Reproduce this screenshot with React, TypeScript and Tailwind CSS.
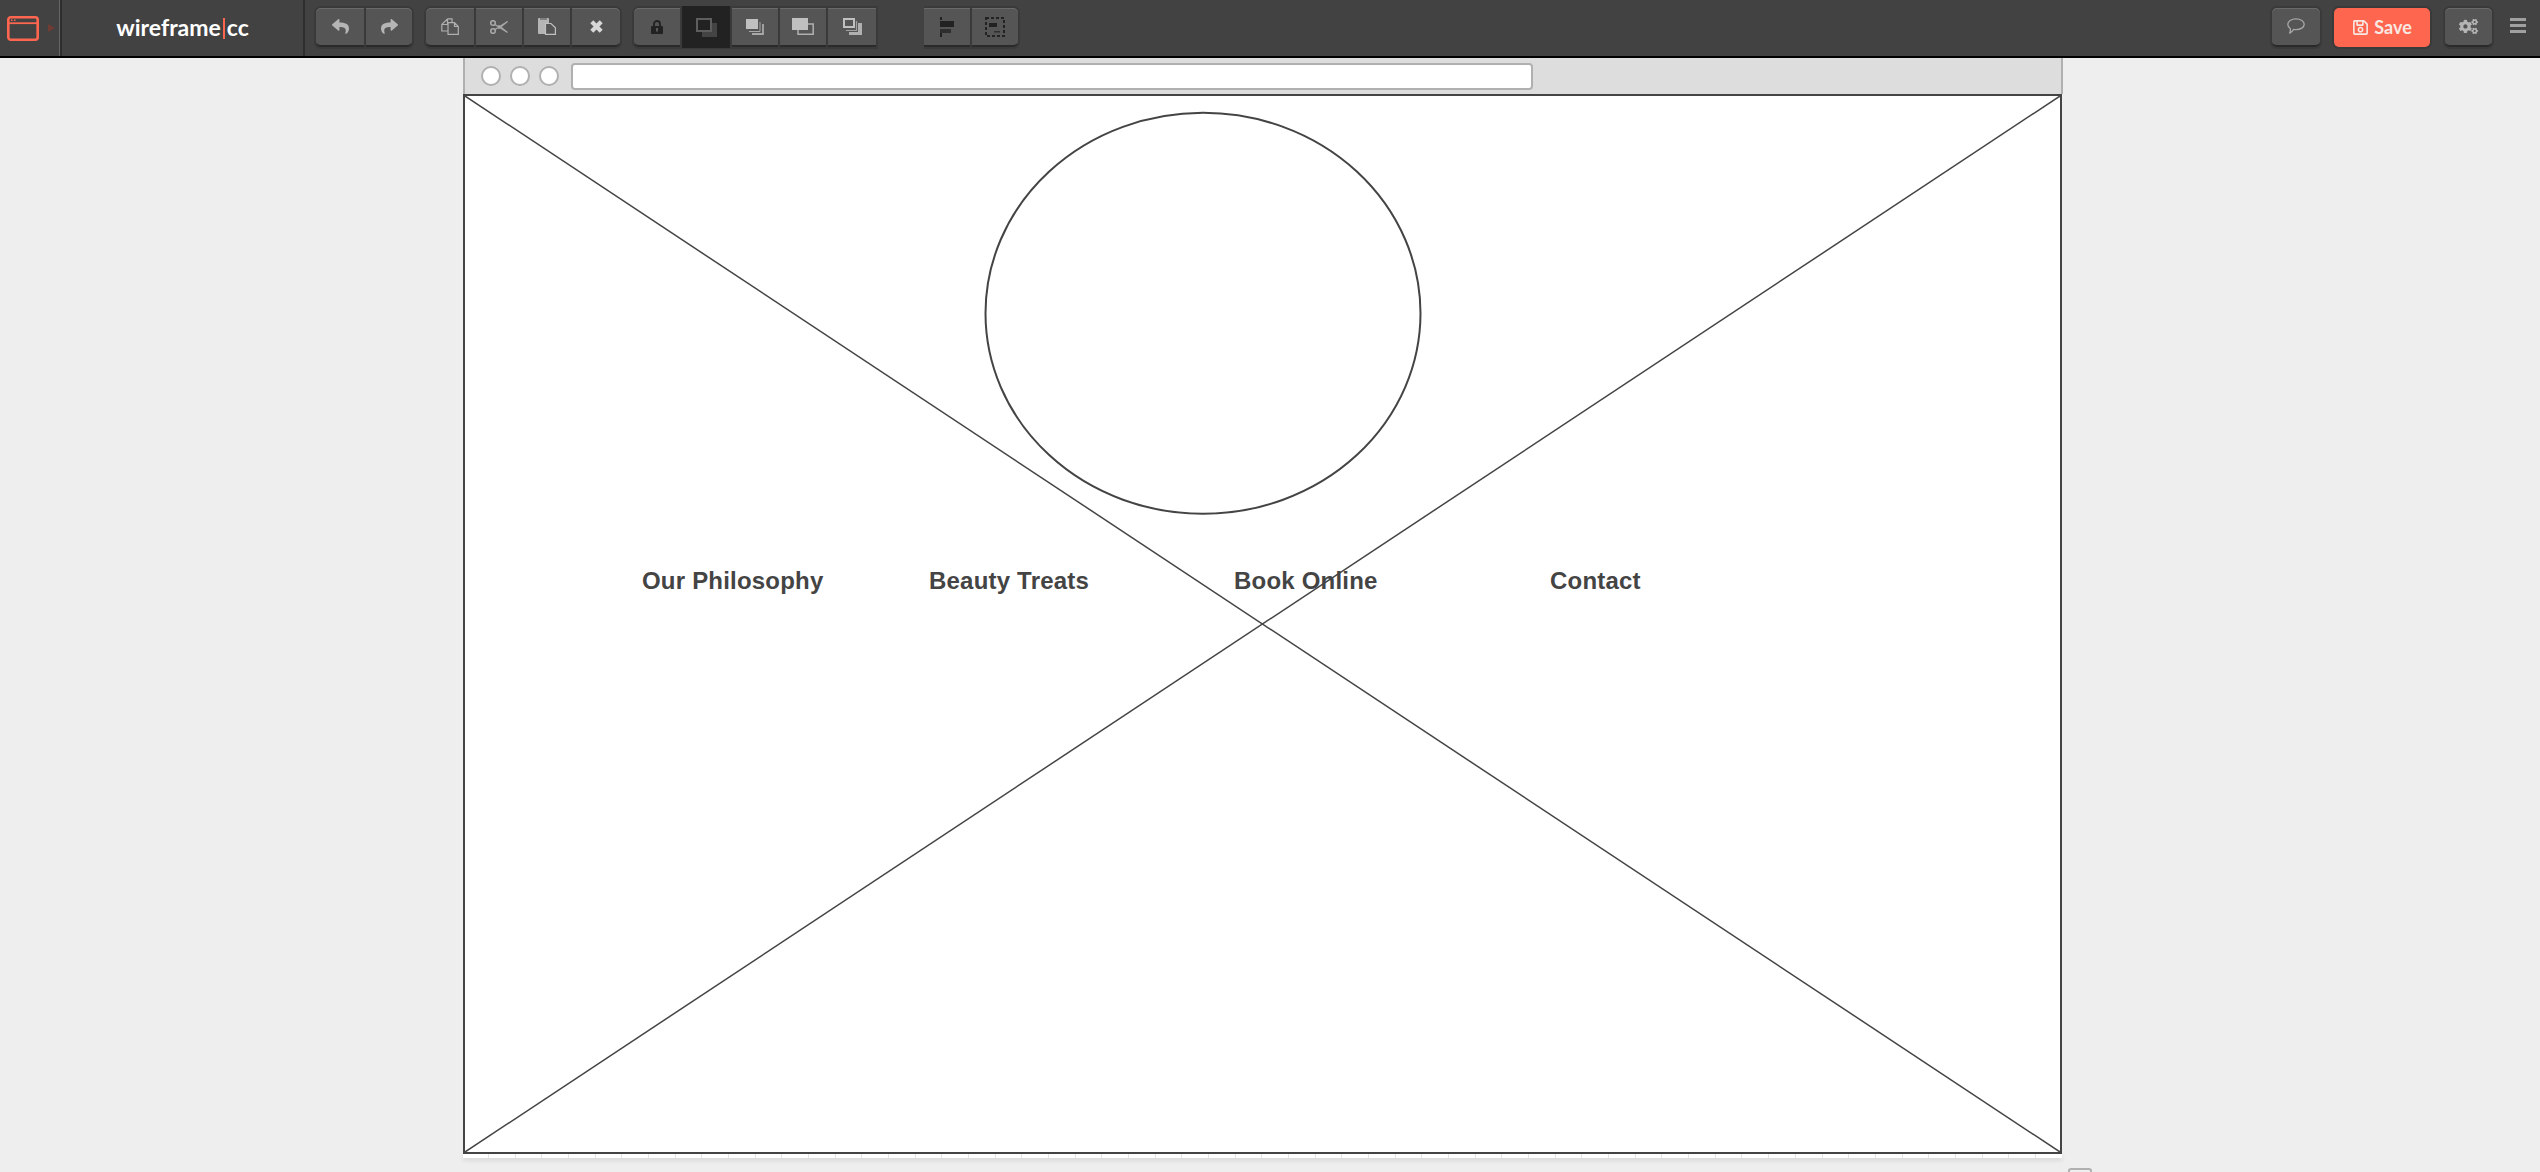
import React from "react";
import { FaReply, FaShare, FaRegSave, FaCogs } from "react-icons/fa";

function Btn({ className = "", children }: { className?: string; children?: React.ReactNode }) {
  return (
    <div className={"h-[39px] flex items-center justify-center bg-[#555555] border-b-2 border-[#2a2a2a] shadow-[inset_0_1px_0_#6a6a6a] text-[#b5b5b5] " + className}>
      {children}
    </div>
  );
}

function Group({ className = "", children }: { className?: string; children: React.ReactNode }) {
  return <div className={"flex self-start mt-[6px] gap-[2px] bg-[#3a3a3a] p-[2px] rounded-[7px] h-[43px] " + className}>{children}</div>;
}

function CopyIcon() {
  return (
    <svg width="18" height="17" viewBox="0 0 18 17" fill="none" stroke="#b0b0b0" strokeWidth="1.2">
      <path d="M6.5 0.8 H11 V4.5 M6.5 0.8 L0.8 6.5 V13 H7 M6.5 0.8 V6.5 H0.8" />
      <path d="M7 4.6 H13.5 L17.3 8.5 V16.4 H7 Z M13.5 4.6 V8.5 H17.3" />
    </svg>
  );
}

function CutIcon() {
  return (
    <svg width="18" height="14" viewBox="0 0 18 14" fill="none" stroke="#a8a8a8" strokeWidth="1.2">
      <circle cx="3" cy="3" r="2.3" strokeWidth="1.6" />
      <circle cx="3" cy="11" r="2.3" strokeWidth="1.6" />
      <path d="M5 4.4 L17.5 12.5 L8.5 5.2 M5 9.6 L17.5 1.5 L8.5 8.8" />
    </svg>
  );
}

function PasteIcon() {
  return (
    <svg width="18" height="17" viewBox="0 0 18 17">
      <rect x="0" y="0" width="11" height="16" fill="#b5b5b5" rx="1" />
      <rect x="2" y="0" width="7" height="2" fill="#808080" />
      <path d="M7.5 5.5 H13 L17.4 9.8 V16.4 H7.5 Z" fill="#555555" stroke="#c0c0c0" strokeWidth="1.2" />
    </svg>
  );
}

function CloseIcon() {
  return (
    <svg width="13" height="13" viewBox="0 0 13 13" fill="none" stroke="#d8d8d8" strokeWidth="4.2">
      <path d="M1.8 1.8 L11.2 11.2 M11.2 1.8 L1.8 11.2" />
    </svg>
  );
}

function LockIcon() {
  return (
    <svg width="12" height="14" viewBox="0 0 12 14">
      <path d="M3 6 V4 a3 3 0 0 1 6 0 V6" fill="none" stroke="#222222" strokeWidth="1.8" />
      <rect x="0" y="6" width="12" height="8" rx="1" fill="#222222" />
      <rect x="5.2" y="8" width="1.6" height="3.5" fill="#666666" />
    </svg>
  );
}

function ActiveStack() {
  return (
    <svg width="21" height="19" viewBox="0 0 21 19" fill="none">
      <path d="M16 5 H21 V19 H6 V14 H16 Z" fill="#444444" />
      <rect x="1" y="1" width="14" height="12" stroke="#5e5e5e" strokeWidth="2" />
    </svg>
  );
}

function ForwardIcon() {
  return (
    <svg width="18" height="16" viewBox="0 0 18 16" fill="none">
      <rect x="0" y="0" width="12" height="10" fill="#c0c0c0" />
      <path d="M14 3 V12.5 H3" stroke="#a8a8a8" strokeWidth="1" />
      <path d="M17 5 V15 H6" stroke="#a8a8a8" strokeWidth="1.8" />
    </svg>
  );
}

function FrontIcon() {
  return (
    <svg width="22" height="17" viewBox="0 0 22 17" fill="none">
      <path d="M16 6 H21.2 V16.2 H6 V12" stroke="#b0b0b0" strokeWidth="1.5" />
      <rect x="0" y="0" width="16" height="12" fill="#c0c0c0" />
    </svg>
  );
}

function BackwardIcon() {
  return (
    <svg width="19" height="17" viewBox="0 0 19 17" fill="none">
      <path d="M15 5 H19 V17 H6 V14 H15 Z" fill="#b0b0b0" />
      <path d="M13.5 3 V12.5 H3" stroke="#a0a0a0" strokeWidth="1.2" />
      <rect x="1" y="1" width="10" height="8" stroke="#c0c0c0" strokeWidth="2" />
    </svg>
  );
}

function AlignIcon() {
  return (
    <svg width="14" height="20" viewBox="0 0 14 20" fill="#222222">
      <rect x="0" y="0" width="2" height="3" />
      <rect x="0" y="4" width="14" height="6" />
      <rect x="0" y="12" width="11" height="4" fill="#2e2e2e" />
      <rect x="0" y="16" width="2" height="4" />
    </svg>
  );
}

function GroupIcon() {
  return (
    <svg width="20" height="20" viewBox="0 0 20 20" fill="none">
      <rect x="1" y="1" width="18" height="18" stroke="#222222" strokeWidth="2" strokeDasharray="3 2" />
      <rect x="4" y="6" width="8" height="4" fill="#222222" />
      <rect x="9" y="14" width="6" height="1.5" fill="#2e2e2e" />
    </svg>
  );
}

function CommentIcon() {
  return (
    <svg width="18" height="17" viewBox="0 0 18 17" fill="none" stroke="#a8a8a8" strokeWidth="1.3">
      <path d="M9 0.9 C13.6 0.9 17.2 3.2 17.2 6.3 C17.2 9.4 13.6 11.7 9 11.7 C8 11.7 7.2 11.6 6.4 11.5 C5.6 13.2 4.2 14.6 2.4 15.4 C3.4 14.2 3.6 12.8 3.4 10.8 C1.8 9.8 0.8 8.2 0.8 6.3 C0.8 3.2 4.4 0.9 9 0.9 Z" />
    </svg>
  );
}

const labelClass = "absolute top-[471px] font-['Liberation_Sans',sans-serif] text-[24px] font-bold leading-[28px] tracking-[0.2px] text-[#444444]";

export default function App() {
  return (
    <div className="relative h-[1172px] w-[2540px] overflow-hidden bg-[#eeeeee] font-['Lato',sans-serif]">
      <header className="flex h-[58px] items-center border-b-2 border-black bg-[#424242]">
        <div className="flex h-full w-[62px] shrink-0 items-center border-r-2 border-[#2e2e2e] pl-[7px] shadow-[inset_-1px_0_0_#666666]">
          <svg width="32" height="25" viewBox="0 0 32 25" fill="none" stroke="#ff6650" strokeWidth="2.6">
            <rect x="1.3" y="1.3" width="29.4" height="22.4" rx="2.5" />
            <path d="M1.5 7.2 H30.5" strokeWidth="1.8" />
            <path d="M4 4.3 H5.5 M7 4.3 H8.5" strokeWidth="1.4" />
          </svg>
          <div className="ml-[9px] h-0 w-0 border-y-[4px] border-l-[7px] border-y-transparent border-l-[#703c34]" />
        </div>
        <div className="flex h-full w-[243px] shrink-0 items-center justify-center border-r-2 border-[#2e2e2e] text-[23px] font-bold leading-none text-white">
          <span className="pb-[2px]">wireframe</span>
          <span className="mx-[2px] h-[21px] w-[2px] bg-[#ff6650]" />
          <span className="pb-[2px]">cc</span>
        </div>

        <Group className="ml-[9px]">
          <Btn className="w-[48px] rounded-l-[5px]"><FaReply size={17} /></Btn>
          <Btn className="w-[46px] rounded-r-[5px]"><FaShare size={17} /></Btn>
        </Group>
        <Group className="ml-[10px]">
          <Btn className="w-[48px] rounded-l-[5px]"><CopyIcon /></Btn>
          <Btn className="w-[46px]"><CutIcon /></Btn>
          <Btn className="w-[46px]"><PasteIcon /></Btn>
          <Btn className="w-[48px] rounded-r-[5px]"><CloseIcon /></Btn>
        </Group>
        <Group className="ml-[10px] rounded-r-none">
          <Btn className="w-[46px] rounded-l-[5px]"><LockIcon /></Btn>
          <div className="-mt-[2px] flex h-[42px] w-[48px] items-center justify-center bg-[#222222]"><ActiveStack /></div>
          <Btn className="w-[46px]"><ForwardIcon /></Btn>
          <Btn className="w-[46px]"><FrontIcon /></Btn>
          <Btn className="w-[48px]"><BackwardIcon /></Btn>
        </Group>
        <Group className="ml-[46px] rounded-l-none pl-0">
          <Btn className="w-[46px]"><AlignIcon /></Btn>
          <Btn className="w-[46px] rounded-r-[5px]"><GroupIcon /></Btn>
        </Group>

        <Group className="ml-auto">
          <Btn className="w-[48px] rounded-[5px]"><CommentIcon /></Btn>
        </Group>
        <div className="ml-[10px] mt-[6px] flex h-[43px] self-start rounded-[7px] bg-[#3a3a3a] p-[2px]">
          <div className="flex h-[39px] w-[96px] items-center justify-center gap-[5px] rounded-[5px] bg-[#ff6650] text-[18px] font-bold text-[#f8e8e2]">
            <FaRegSave size={17} />
            <span>Save</span>
          </div>
        </div>
        <Group className="ml-[11px]">
          <Btn className="w-[47px] rounded-[5px]"><FaCogs size={19} /></Btn>
        </Group>
        <div className="mb-[5px] ml-[16px] mr-[14px] flex w-[16px] flex-col gap-[3px]">
          <span className="h-[3px] bg-[#a0a0a0]" />
          <span className="h-[3px] bg-[#a0a0a0]" />
          <span className="h-[3px] bg-[#a0a0a0]" />
        </div>
      </header>

      <main className="ml-[463px] w-[1600px]">
        <div className="flex h-[36px] items-center border-x-2 border-[#b0b0b0] bg-[#dddddd] pl-[16px]">
          <span className="h-[20px] w-[20px] rounded-full border-2 border-[#b0b0b0] bg-white" />
          <span className="ml-[9px] h-[20px] w-[20px] rounded-full border-2 border-[#b0b0b0] bg-white" />
          <span className="ml-[9px] h-[20px] w-[20px] rounded-full border-2 border-[#b0b0b0] bg-white" />
          <span className="ml-[12px] h-[27px] w-[962px] rounded-[4px] border-2 border-[#b0b0b0] bg-white" />
        </div>
        <div className="relative h-[1060px] w-[1599px] border-2 border-[#444444] bg-white">
          <svg className="absolute inset-0" width="1595" height="1056" viewBox="0 0 1595 1056" fill="none" stroke="#444444" strokeWidth="1.5">
            <path d="M0 0 L1595 1056" />
            <path d="M1595 0 L0 1056" />
            <ellipse cx="738" cy="217.3" rx="217.5" ry="200.5" strokeWidth="2" />
          </svg>
          <span className={labelClass + " left-[177px]"}>Our Philosophy</span>
          <span className={labelClass + " left-[464px]"}>Beauty Treats</span>
          <span className={labelClass + " left-[769px]"}>Book Online</span>
          <span className={labelClass + " left-[1085px]"}>Contact</span>
        </div>
        <div className="h-[4px] w-[1599px] bg-white bg-[repeating-linear-gradient(90deg,transparent_0,transparent_25px,#e4e4e4_25px,#e4e4e4_26px,transparent_26px,transparent_26.67px)] shadow-[0_2px_5px_rgba(0,0,0,0.12)]" />
      </main>
      <div className="absolute left-[2068px] top-[1168px] h-[10px] w-[24px] rounded-[3px] border-2 border-[#b0b0b0]" />
    </div>
  );
}
